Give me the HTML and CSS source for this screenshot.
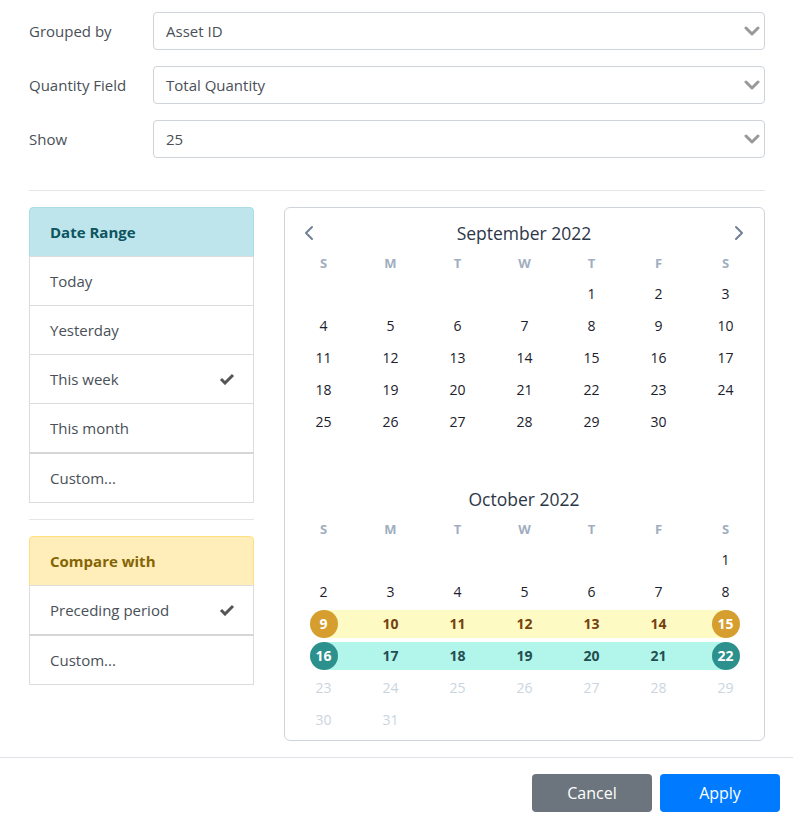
FILE: index.html
```html
<!DOCTYPE html>
<html lang="en">
<head>
  <meta charset="UTF-8" />
  <meta name="viewport" content="width=device-width, initial-scale=1" />
  <title>Report filters</title>
  <link rel="stylesheet" href="styles.css">
</head>
<body>

  <div class="filters">
    <div class="row"><label>Grouped by</label><div class="select">Asset ID</div></div>
    <div class="row"><label>Quantity Field</label><div class="select">Total Quantity</div></div>
    <div class="row"><label>Show</label><div class="select">25</div></div>
  </div>

  <hr class="sep">

  <div class="main">
    <div class="side">
      <ul class="list">
        <li class="head info">Date Range</li>
        <li>Today</li>
        <li>Yesterday</li>
        <li class="checked">This week</li>
        <li>This month</li>
        <li class="custom">Custom...</li>
      </ul>
      <hr class="sep small">
      <ul class="list">
        <li class="head warn">Compare with</li>
        <li class="checked">Preceding period</li>
        <li class="custom">Custom...</li>
      </ul>
    </div>

    <div class="calendar">
      <div class="month" id="sep"></div>
      <div class="month" id="oct"></div>
    </div>
  </div>

  <div class="footer">
    <button class="btn grey">Cancel</button>
    <button class="btn blue">Apply</button>
  </div>

  <script>
    const chevL = '<svg width="10" height="16" viewBox="0 0 10 16"><path d="M8 2 L2 8 L8 14" fill="none" stroke="#718096" stroke-width="2" stroke-linecap="round" stroke-linejoin="round"/></svg>';
    const chevR = '<svg width="10" height="16" viewBox="0 0 10 16"><path d="M2 2 L8 8 L2 14" fill="none" stroke="#718096" stroke-width="2" stroke-linecap="round" stroke-linejoin="round"/></svg>';

    function buildMonth(el, title, offset, days, opts) {
      let html = '<div class="title">';
      html += opts.nav ? '<span class="nav">' + chevL + '</span>' : '<span class="nav"></span>';
      html += '<span>' + title + '</span>';
      html += opts.nav ? '<span class="nav">' + chevR + '</span>' : '<span class="nav"></span>';
      html += '</div><div class="grid">';
      ["S", "M", "T", "W", "T", "F", "S"].forEach(d => html += '<div class="dow">' + d + '</div>');
      for (let i = 0; i < 42; i++) {
        const n = i - offset + 1;
        if (n < 1 || n > days) { html += '<div class="day"></div>'; continue; }
        let cls = "day";
        if (n >= 9 && n <= 15) cls += " prev";
        if (n >= 16 && n <= 22) cls += " cur";
        if (n == 9 || n == 16) cls += " start";
        if (n == 15 || n == 22) cls += " end";
        if (opts.range && n > 22) cls += " off";
        if (!opts.range) cls = "day";
        html += '<div class="' + cls + '"><span>' + n + '</span></div>';
      }
      el.innerHTML = html + '</div>';
    }

    buildMonth(document.getElementById("sep"), "September 2022", 4, 30, { nav: true });
    buildMonth(document.getElementById("oct"), "October 2022", 6, 31, { range: true });
  </script>
</body>
</html>
```

FILE: styles.css
```css
body {
  margin: 0;
  font-family: "Open Sans", "Noto Sans", sans-serif;
  font-size: 15px;
  color: #495057;
  background: #fff;
}
.filters {
  padding: 12px 28px 0 29px;
  display: flex;
  flex-direction: column;
  gap: 16px;
}
.row {
  display: grid;
  grid-template-columns: 124px 1fr;
  align-items: center;
}
.select {
  height: 36px;
  border: 1px solid #ced4da;
  border-radius: 4px;
  padding: 0 12px;
  line-height: 36px;
  background: #fff url("data:image/svg+xml;utf8,<svg xmlns='http://www.w3.org/2000/svg' width='16' height='10' viewBox='0 0 16 10'><path d='M2 2 L8 8 L14 2' fill='none' stroke='%23999' stroke-width='3' stroke-linecap='round' stroke-linejoin='round'/></svg>") no-repeat right 4px center;
}
.sep {
  border: 0;
  border-top: 1px solid #e4e6e8;
  margin: 32px 28px 16px 29px;
}
.sep.small {
  margin: 16px 0;
}
.main {
  display: flex;
  gap: 30px;
  padding: 0 28px 0 29px;
}
.side {
  width: 225px;
  flex: none;
}
.list {
  list-style: none;
  margin: 0;
  padding: 0;
}
.list li {
  border: 1px solid #dcdcdc;
  margin-bottom: -1px;
  padding: 12px 20px;
  line-height: 24px;
  display: flex;
  justify-content: space-between;
  align-items: center;
}
.list li:last-child {
  margin-bottom: 0;
}
.list .head {
  font-weight: bold;
  border-radius: 4px 4px 0 0;
}
.list .info {
  background: #bee5eb;
  border-color: #abdde5;
  color: #0c5460;
}
.list .warn {
  background: #ffeeba;
  border-color: #ffdf7e;
  color: #856404;
}
.list .checked::after {
  content: "";
  width: 16px;
  height: 12px;
  background: url("data:image/svg+xml;utf8,<svg xmlns='http://www.w3.org/2000/svg' width='16' height='12' viewBox='0 0 16 12'><path d='M2 6 L6 10 L14 2' fill='none' stroke='%23555' stroke-width='3'/></svg>") no-repeat;
  margin-right: -2px;
}
.list .custom {
  border-top: 2px solid #d6d6d6;
}
.calendar {
  flex: 1;
  border: 1px solid #cfd4da;
  border-radius: 6px;
  padding: 0 5px 4px;
  color: #1a202c;
}
.month {
  padding-top: 10px;
}
.month + .month {
  padding-top: 14px;
}
.title {
  height: 30px;
  display: flex;
  align-items: center;
  justify-content: space-between;
  font-size: 17.5px;
  color: #2d3748;
  padding: 0 15px 0 14px;
}
.nav {
  width: 10px;
  height: 16px;
  display: flex;
}
.grid {
  display: grid;
  grid-template-columns: repeat(7, 1fr);
}
.dow {
  height: 30px;
  line-height: 30px;
  text-align: center;
  font-size: 13px;
  font-weight: bold;
  color: #a0aec0;
}
.day {
  height: 32px;
  display: flex;
  align-items: center;
  justify-content: center;
  font-size: 14px;
  background-repeat: no-repeat;
  background-position: center;
  background-size: 100% 28px;
}
.day span {
  width: 28px;
  height: 28px;
  line-height: 28px;
  text-align: center;
  border-radius: 50%;
}
.day.off {
  color: #cbd5e0;
}
.day.prev {
  background-image: linear-gradient(#fefac4, #fefac4);
  color: #744210;
  font-weight: bold;
}
.day.cur {
  background-image: linear-gradient(#b2f5ea, #b2f5ea);
  color: #234e52;
  font-weight: bold;
}
.day.prev.start {
  background-image: linear-gradient(to right, transparent 50%, #fefac4 50%);
}
.day.prev.end {
  background-image: linear-gradient(to left, transparent 50%, #fefac4 50%);
}
.day.cur.start {
  background-image: linear-gradient(to right, transparent 50%, #b2f5ea 50%);
}
.day.cur.end {
  background-image: linear-gradient(to left, transparent 50%, #b2f5ea 50%);
}
.day.prev.start span,
.day.prev.end span {
  background: #d69e2e;
  color: #fff;
}
.day.cur.start span,
.day.cur.end span {
  background: #2c918c;
  color: #fff;
}
.footer {
  margin-top: 16px;
  border-top: 1px solid #dee2e6;
  padding: 16px 13px 0 0;
  display: flex;
  justify-content: flex-end;
  gap: 8px;
}
.btn {
  width: 120px;
  height: 38px;
  border: 0;
  border-radius: 4px;
  color: #fff;
  font-family: inherit;
  font-size: 16px;
}
.btn.grey {
  background: #6c757d;
}
.btn.blue {
  background: #007bff;
}
```
